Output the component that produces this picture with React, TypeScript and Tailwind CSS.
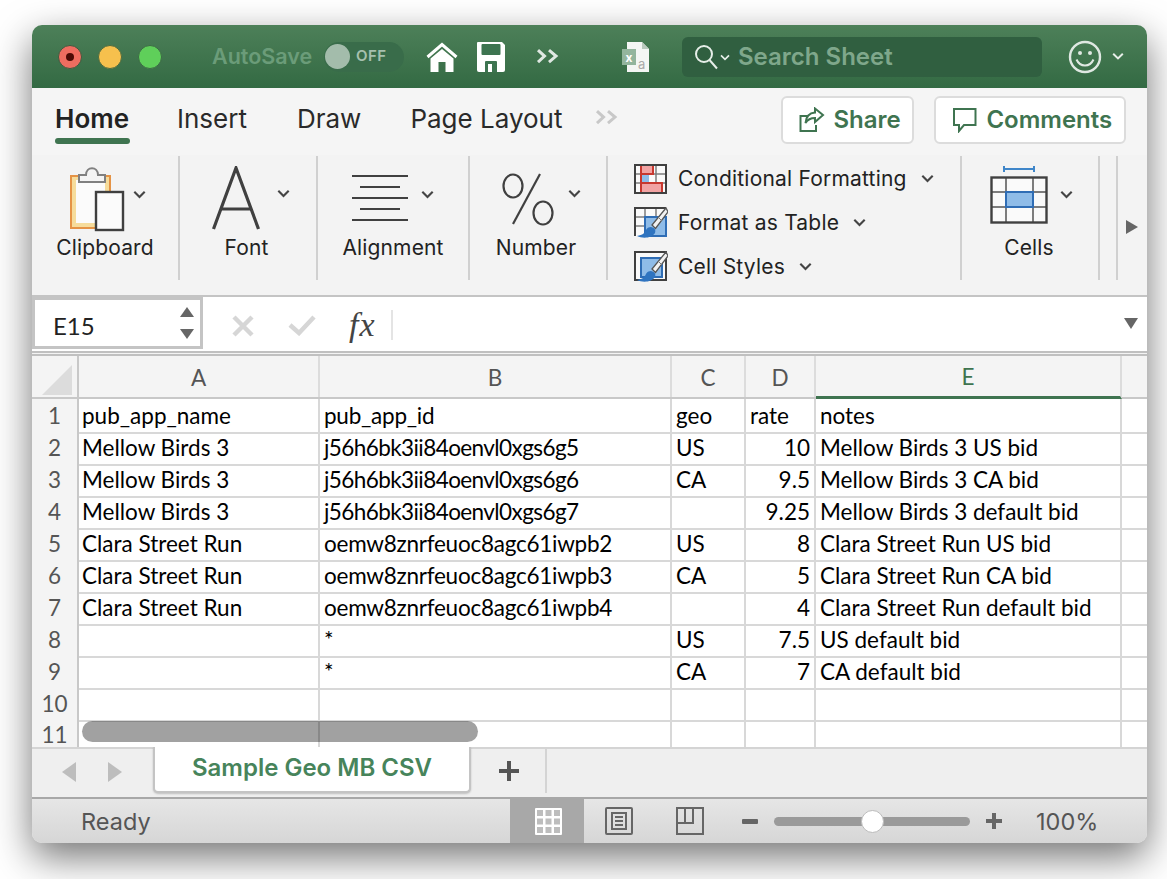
import React from "react";

const UI = "font-['Inter','Liberation_Sans',sans-serif]";
const CELL = "font-['Lato','Open_Sans',sans-serif]";

const Chevron = ({ color = "#444", w = 12, cls = "" }: { color?: string; w?: number; cls?: string }) => (
  <svg width={w} height={w * 0.7} viewBox="0 0 12 8" className={cls} fill="none">
    <path d="M1.2 1.5 6 6.2l4.8-4.700" stroke={color} strokeWidth="2" />
  </svg>
);

const Home = () => (
  <svg width="32" height="30" viewBox="0 0 32 30">
    <path d="M1.500 15 16 2.500 30.500 15" fill="none" stroke="#fff" strokeWidth="3" />
    <path d="M4.500 16.500 16 7l11.500 9.500V30h-8V20h-7v10h-8z" fill="#fff" />
  </svg>
);

const Save = () => (
  <svg width="28" height="30" viewBox="0 0 28 30">
    <path d="M1 0h24l3 3v25a2 2 0 0 1-2 2H2a2 2 0 0 1-2-2V1a1 1 0 0 1 1-1z" fill="#fff" />
    <rect x="4.500" y="2" width="19" height="11" rx="1" fill="#3d7450" />
    <path d="M8 30V20a1 1 0 0 1 1-1h10a1 1 0 0 1 1 1v10z" fill="#3d7450" />
    <rect x="11" y="22" width="4" height="8" fill="#fff" />
  </svg>
);

const DoubleChevron = ({ color, w = 24 }: { color: string; w?: number }) => (
  <svg width={w} height={w * 0.67} viewBox="0 0 24 16" fill="none">
    <path d="M2 2l6.500 6L2 14M13 2l7 6-7 6" stroke={color} strokeWidth="3" />
  </svg>
);

const FileIcon = () => (
  <svg width="28" height="32" viewBox="0 0 28 32">
    <path d="M5 1h15l7 7v23H5z" fill="#f4f6f4" />
    <path d="M20 1v7h7z" fill="#b9c9bd" />
    <rect x="0" y="8" width="14" height="16" fill="#93b59d" />
    <text x="3.500" y="21" fontSize="12" fontWeight="700" fill="#fff" fontFamily="Inter">x</text>
    <text x="16" y="28" fontSize="13" fill="#a9a9a9" fontFamily="Inter">a</text>
  </svg>
);

const Search = () => (
  <svg width="24" height="26" viewBox="0 0 24 26" fill="none">
    <circle cx="10" cy="10" r="8" stroke="#e6eee8" strokeWidth="2" />
    <path d="M15.500 16 23 24.500" stroke="#e6eee8" strokeWidth="2" />
  </svg>
);

const Smile = () => (
  <svg width="34" height="34" viewBox="0 0 34 34" fill="none">
    <circle cx="17" cy="17" r="15" stroke="#dfe8e2" strokeWidth="2.400" />
    <circle cx="12" cy="13" r="2" fill="#dfe8e2" />
    <circle cx="22" cy="13" r="2" fill="#dfe8e2" />
    <path d="M8.500 19.500c2 4.500 5 6 8.500 6s6.500-1.500 8.500-6" stroke="#dfe8e2" strokeWidth="2" />
  </svg>
);

const ShareIcon = () => (
  <svg width="26" height="26" viewBox="0 0 26 26" fill="none" stroke="#3f7450" strokeWidth="2">
    <path d="M9 9H1.500v15h15.500v-6" />
    <path d="M16 1.500 24 8l-8 7v-4c-4 0-7 1-9.500 5 .5-6 4-10 9.500-10.500z" />
  </svg>
);

const CommentIcon = () => (
  <svg width="26" height="26" viewBox="0 0 26 26" fill="none" stroke="#3f7450" strokeWidth="2">
    <path d="M2 2h21.500v16H12l-5 6v-6H2z" />
  </svg>
);

const Clipboard = () => (
  <svg width="56" height="68" viewBox="0 0 56 68">
    <rect x="1" y="10" width="39" height="52" fill="#f6dc9b" stroke="#e59345" strokeWidth="2" />
    <rect x="6" y="14" width="29" height="43" fill="#fbfbfb" />
    <path d="M9 16v-7h7c0-9 12-9 12 0h7v7z" fill="#f4f4f4" stroke="#808080" strokeWidth="2" />
    <rect x="26" y="26" width="27" height="38" fill="#fbfbfb" stroke="#3f3f3f" strokeWidth="2.400" />
  </svg>
);

const BigA = () => (
  <svg width="48" height="64" viewBox="0 0 48 64" fill="none" stroke="#404040" strokeWidth="3.200">
    <path d="M1.500 63 24 2l22.500 61M8 43h32" />
  </svg>
);

const AlignIcon = () => (
  <svg width="56" height="48" viewBox="0 0 56 48" stroke="#404040" strokeWidth="2">
    <path d="M0 2h56M8 13h40M0 24h56M8 35h40M0 46h56" />
  </svg>
);

const Percent = () => (
  <svg width="52" height="54" viewBox="0 0 52 54" fill="none" stroke="#404040" strokeWidth="2.200">
    <ellipse cx="11" cy="14" rx="9.500" ry="11.500" />
    <ellipse cx="41" cy="41" rx="9.500" ry="11.500" />
    <path d="M38 2 11 52" />
  </svg>
);

const CondFmt = () => (
  <svg width="33" height="30" viewBox="0 0 33 30">
    <rect x="1" y="1" width="31" height="28" fill="#fafafa" />
    <path d="M11 1v28M22 1v28M1 10h31M1 19h31" stroke="#7d7d7d" strokeWidth="1.500" />
    <path d="M7 1h12v9H7z" fill="#f2a3a3" stroke="#c8382f" strokeWidth="2" />
    <path d="M7 19h21v10H7z" fill="#f2a3a3" stroke="#c8382f" strokeWidth="2" />
    <path d="M7 1v28" stroke="#c8382f" strokeWidth="2" />
    <rect x="8" y="11" width="7" height="7" fill="#8fbce8" />
    <rect x="1" y="1" width="31" height="28" fill="none" stroke="#404040" strokeWidth="2" />
  </svg>
);

const Brush = () => (
  <g>
    <path d="M32 1 18 18l3.500 3.500L34 5z" fill="#f2f2f2" stroke="#555" strokeWidth="1.300" />
    <path d="M24 10l4 4" stroke="#777" strokeWidth="1" />
    <path d="M17 20c-4 0-5 3-6 5-1 2-4 3-8 4 6 3 15 2 18-3 1-3 0-5-4-6z" fill="#2f74c0" />
  </g>
);

const TableFmt = () => (
  <svg width="34" height="32" viewBox="0 0 34 32">
    <rect x="1" y="1" width="31" height="28" fill="#fafafa" />
    <path d="M11 1v28M22 1v28M1 10h31M1 19h31" stroke="#7d7d7d" strokeWidth="1.500" />
    <path d="M1 29V1h31" fill="none" stroke="#404040" strokeWidth="2" />
    <rect x="11" y="10" width="21" height="19" fill="#8fbce8" stroke="#2f6db5" strokeWidth="2" />
    <Brush />
  </svg>
);

const StyleFmt = () => (
  <svg width="34" height="32" viewBox="0 0 34 32">
    <rect x="1" y="1" width="31" height="28" fill="#fafafa" stroke="#404040" strokeWidth="2" />
    <rect x="7" y="7" width="21" height="19" fill="#8fbce8" stroke="#2f6db5" strokeWidth="2" />
    <Brush />
  </svg>
);

const CellsIcon = () => (
  <svg width="58" height="58" viewBox="0 0 58 58">
    <path d="M14 3h30" stroke="#3f86c9" strokeWidth="2" />
    <path d="M14 0v6M44 0v6" stroke="#3f86c9" strokeWidth="2" />
    <rect x="1.500" y="11" width="55" height="45" fill="#fafafa" />
    <path d="M16 11v45M43 11v45M1 26h56M1 41h56" stroke="#7d7d7d" strokeWidth="2" />
    <rect x="16" y="26" width="27" height="15" fill="#8fbce8" stroke="#2f6db5" strokeWidth="2" />
    <rect x="1.500" y="11.500" width="55" height="45" fill="none" stroke="#404040" strokeWidth="2.400" />
  </svg>
);

function Group({ w, pl, label, labelCls = "", children }: { w: string; pl: string; label: string; labelCls?: string; children: React.ReactNode }) {
  return (
    <div className={`${w} h-[124px] shrink-0 flex flex-col border-r-2 border-[#d0d0d0]`}>
      <div className={`h-[80px] flex pt-[10px] ${pl}`}>{children}</div>
      <div className={`h-[24px] leading-[24px] text-center text-[21px] tracking-[0.15px] text-[#222] ${labelCls}`}>{label}</div>
    </div>
  );
}

const rows: [string, string, string, string, string][] = [
  ["pub_app_name", "pub_app_id", "geo", "rate", "notes"],
  ["Mellow Birds 3", "j56h6bk3ii84oenvl0xgs6g5", "US", "10", "Mellow Birds 3 US bid"],
  ["Mellow Birds 3", "j56h6bk3ii84oenvl0xgs6g6", "CA", "9.5", "Mellow Birds 3 CA bid"],
  ["Mellow Birds 3", "j56h6bk3ii84oenvl0xgs6g7", "", "9.25", "Mellow Birds 3 default bid"],
  ["Clara Street Run", "oemw8znrfeuoc8agc61iwpb2", "US", "8", "Clara Street Run US bid"],
  ["Clara Street Run", "oemw8znrfeuoc8agc61iwpb3", "CA", "5", "Clara Street Run CA bid"],
  ["Clara Street Run", "oemw8znrfeuoc8agc61iwpb4", "", "4", "Clara Street Run default bid"],
  ["", "*", "US", "7.5", "US default bid"],
  ["", "*", "CA", "7", "CA default bid"],
  ["", "", "", "", ""],
  ["", "", "", "", ""],
];

const gridCols = "grid grid-cols-[47px_241px_352px_74px_70px_306px_25px]";

export default function App() {
  return (
    <div className="w-[1167px] h-[879px] bg-white pt-[25px] pl-[32px] overflow-hidden">
      <div className={`${UI} w-[1115px] h-[818px] rounded-[10px] overflow-hidden flex flex-col shadow-[0_14px_38px_rgba(0,0,0,0.55)] bg-[#f3f3f3]`}>
        {/* Title bar */}
        <div className="h-[63px] shrink-0 flex items-center bg-gradient-to-b from-[#4d8059] to-[#336a43] pl-[26px]">
          <div className="w-[24px] h-[24px] rounded-full bg-[#ef6d60] border border-[#3d5a3f] flex items-center justify-center">
            <div className="w-[8px] h-[8px] rounded-full bg-[#4c0b06]" />
          </div>
          <div className="w-[24px] h-[24px] rounded-full bg-[#f6c04d] border border-[#4d6a3f] ml-[16px]" />
          <div className="w-[24px] h-[24px] rounded-full bg-[#5fcf5a] border border-[#3d6a45] ml-[16px]" />
          <div className="ml-[50px] w-[100px] whitespace-nowrap text-[21.5px] font-semibold text-[#6b9c79]">AutoSave</div>
          <div className="ml-[12px] w-[80px] h-[30px] rounded-full bg-[#396c4a] flex items-center pl-[1px]">
            <div className="w-[25px] h-[25px] rounded-full bg-[#a3bcab]" />
            <div className="ml-[6px] text-[15px] font-semibold text-[#a6c0ae] tracking-[0.5px]">OFF</div>
          </div>
          <div className="ml-[22px] flex"><Home /></div>
          <div className="ml-[19px] flex"><Save /></div>
          <div className="ml-[31px] flex"><DoubleChevron color="#dfe8e2" /></div>
          <div className="ml-[62px] flex"><FileIcon /></div>
          <div className="ml-[32px] w-[360px] h-[40px] rounded-[6px] bg-[#305f40] flex items-center pl-[12px]">
            <Search />
            <Chevron color="#e6eee8" w={10} cls="ml-[2px] mt-[2px]" />
            <div className="ml-[8px] text-[24px] font-semibold text-[#7fa78b]">Search Sheet</div>
          </div>
          <div className="ml-[26px] flex"><Smile /></div>
          <Chevron color="#e6eee8" w={12} cls="ml-[10px]" />
        </div>

        {/* Tabs */}
        <div className="h-[67px] shrink-0 flex bg-[#f5f5f5] pl-[23px]">
          <div className="w-[75px] flex flex-col pt-[15px]">
            <div className="h-[32px] leading-[32px] text-[26px] font-semibold text-[#222]">Home</div>
            <div className="mt-[3px] h-[6px] rounded-full bg-[#3f7450]" />
          </div>
          <div className="ml-[47px] pt-[15px] h-[47px] leading-[32px] text-[26px] text-[#2a2a2a]">Insert</div>
          <div className="ml-[50px] pt-[15px] h-[47px] leading-[32px] text-[26px] text-[#2a2a2a]">Draw</div>
          <div className="ml-[49px] w-[153px] pt-[15px] h-[47px] leading-[32px] text-[26px] text-[#2a2a2a] whitespace-nowrap">Page Layout</div>
          <div className="ml-[32px] pt-[21px]"><DoubleChevron color="#c8c8c8" /></div>
          <div className="ml-[162px] mt-[8px] w-[133px] h-[48px] rounded-[6px] border-2 border-[#dcdcdc] bg-white flex items-center pl-[16px]">
            <ShareIcon />
            <span className="ml-[8px] text-[24px] font-semibold text-[#3f7450]">Share</span>
          </div>
          <div className="ml-[20px] mt-[8px] w-[192px] h-[48px] rounded-[6px] border-2 border-[#dcdcdc] bg-white flex items-center pl-[16px]">
            <CommentIcon />
            <span className="ml-[8px] text-[24px] font-semibold text-[#3f7450]">Comments</span>
          </div>
        </div>

        {/* Ribbon */}
        <div className="h-[142px] shrink-0 flex bg-[#f3f3f3] border-b-2 border-[#c4c4c4] pt-[1px]">
          <Group w="w-[148px]" pl="pl-[38px]" label="Clipboard">
            <Clipboard />
            <Chevron w={13} cls="ml-[7px] mt-[24px]" />
          </Group>
          <Group w="w-[138px]" pl="pl-[32px]" label="Font" labelCls="pr-[3px]">
            <BigA />
            <Chevron w={13} cls="ml-[17px] mt-[23px]" />
          </Group>
          <Group w="w-[152px]" pl="pl-[34px] pt-[18px]" label="Alignment">
            <AlignIcon />
            <Chevron w={13} cls="ml-[13px] mt-[16px]" />
          </Group>
          <Group w="w-[138px]" pl="pl-[32px]" label="Number" labelCls="pr-[4px]">
            <div className="mt-[6px] flex"><Percent /></div>
            <Chevron w={13} cls="ml-[14px] mt-[23px]" />
          </Group>
          <div className="w-[354px] h-[124px] shrink-0 flex flex-col border-r-2 border-[#d0d0d0] pt-[1px] pl-[26px] text-[21px] text-[#222] tracking-[0.2px]">
            <div className="h-[44px] shrink-0 flex items-center"><CondFmt /><span className="ml-[11px]">Conditional Formatting</span><Chevron w={13} cls="ml-[14px]" /></div>
            <div className="h-[44px] shrink-0 flex items-center"><TableFmt /><span className="ml-[10px]">Format as Table</span><Chevron w={13} cls="ml-[14px]" /></div>
            <div className="h-[44px] shrink-0 flex items-center"><StyleFmt /><span className="ml-[10px]">Cell Styles</span><Chevron w={13} cls="ml-[14px]" /></div>
          </div>
          <Group w="w-[138px]" pl="pl-[28px] pt-[8px]" label="Cells" labelCls="pr-[2px]">
            <CellsIcon />
            <Chevron w={13} cls="ml-[12px] mt-[24px]" />
          </Group>
          <div className="w-[18px] h-[124px] shrink-0 border-r-2 border-[#d0d0d0]" />
          <div className="flex-1 flex pl-[8px] pt-[64px]">
            <div className="w-0 h-0 border-y-[7px] border-y-transparent border-l-[12px] border-l-[#666]" />
          </div>
        </div>

        {/* Formula bar */}
        <div className="h-[56px] shrink-0 flex bg-white border-b-2 border-[#c0c0c0]">
          <div className={`${CELL} w-[171px] h-[52px] flex items-center border-t-[3px] border-x-[3px] border-b-[3px] border-[#c4c4c4] pl-[18px] text-[24px] text-[#222]`}>
            <span className="w-[127px] pt-[6px]">E15</span>
            <div className="flex flex-col gap-[12px]">
              <div className="w-0 h-0 border-x-[7px] border-x-transparent border-b-[10px] border-b-[#666]" />
              <div className="w-0 h-0 border-x-[7px] border-x-transparent border-t-[10px] border-t-[#666]" />
            </div>
          </div>
          <svg width="22" height="22" viewBox="0 0 22 22" className="ml-[29px] mt-[18px]" stroke="#d6d6d6" strokeWidth="4.500"><path d="M2 2l18 18M20 2 2 20" /></svg>
          <svg width="28" height="22" viewBox="0 0 28 22" className="ml-[34px] mt-[17px]" fill="none" stroke="#d6d6d6" strokeWidth="4.500"><path d="M2 11l9 8L26 3" /></svg>
          <div className="ml-[33px] mt-[11px] h-[34px] text-[34px] leading-[34px] italic tracking-[1px] text-[#444] font-['Liberation_Serif',serif]">fx</div>
          <div className="ml-[15px] mt-[13px] w-[2px] h-[30px] bg-[#e4e4e4]" />
          <div className="ml-auto mr-[9px] mt-[21px] w-0 h-0 border-x-[7px] border-x-transparent border-t-[11px] border-t-[#666]" />
        </div>

        {/* Sheet */}
        <div className={`${CELL} relative h-[393px] shrink-0 overflow-hidden bg-white border-t-2 border-[#c0c0c0] mt-[1px] text-[22.5px] text-black`}>
          <div className={`${gridCols} h-[43px] bg-[#f4f4f4] text-[#555] border-b-2 border-[#c8c8c8]`}>
            <div className="flex items-end justify-end border-r-2 border-[#c8c8c8] pr-[5px] pb-[2px]">
              <div className="w-0 h-0 border-l-[30px] border-l-transparent border-b-[30px] border-b-[#dcdcdc]" />
            </div>
            {["A", "B", "C", "D"].map((c) => (
              <div key={c} className="flex items-center justify-center border-r-2 border-[#dcdcdc] pt-[2px]">{c}</div>
            ))}
            <div className="flex items-center justify-center text-[#3f7450] border-b-[3px] border-[#3f7450] -mb-[2px] border-r-2 border-r-[#dcdcdc] pt-[2px]">E</div>
            <div />
          </div>
          {rows.map((r, i) => (
            <div key={i} className={`${gridCols} ${i === 10 ? "h-[28px]" : "h-[32px]"} leading-[32px] whitespace-nowrap`}>
              <div className={`text-center bg-[#f4f4f4] text-[#555] border-r-2 border-r-[#c8c8c8] border-b-2 border-b-[#d8d8d8] ${i === 10 ? "pt-[4px] leading-[24px]" : "pt-[1px]"}`}>{i + 1}</div>
              <div className="pl-[3px] pt-[1px] border-r-2 border-b-2 border-[#d8d8d8]">{r[0]}</div>
              <div className={`pl-[4px] pt-[1px] border-r-2 border-b-2 border-[#d8d8d8] ${r[1].startsWith("j") ? "tracking-[-0.58px]" : "tracking-[-0.25px]"}`}>{r[1]}</div>
              <div className="pl-[4px] pt-[1px] border-r-2 border-b-2 border-[#d8d8d8]">{r[2]}</div>
              <div className={`${i === 0 ? "pl-[4px]" : "text-right pr-[4px]"} pt-[1px] border-r-2 border-b-2 border-[#d8d8d8]`}>{r[3]}</div>
              <div className="pl-[4px] pt-[1px] border-r-2 border-b-2 border-[#d8d8d8]">{r[4]}</div>
              <div className="border-b-2 border-[#d8d8d8]" />
            </div>
          ))}
          <div className="absolute left-[50px] bottom-[5px] w-[396px] h-[21px] rounded-full bg-black/[0.37]" />
        </div>

        {/* Sheet tabs */}
        <div className="h-[52px] shrink-0 flex bg-[#efefef] border-t-2 border-[#d4d4d4] border-b-[2px] border-b-[#a8a8a8]">
          <div className="w-[121px] flex items-center pl-[30px] pb-[2px]">
            <div className="w-0 h-0 border-y-[10px] border-y-transparent border-r-[14px] border-r-[#bdbdbd]" />
            <div className="ml-[32px] w-0 h-0 border-y-[10px] border-y-transparent border-l-[14px] border-l-[#bdbdbd]" />
          </div>
          <div className="w-[318px] h-[46px] -mt-[2px] bg-white border-x-2 border-b-2 border-[#c4c4c4] rounded-b-[5px] shadow-[0_1px_2px_rgba(0,0,0,0.2)] flex items-center justify-center text-[24px] font-semibold text-[#47845b] pb-[3px]">
            Sample Geo MB CSV
          </div>
          <div className="w-[76px] flex items-center justify-center border-r-2 border-[#d4d4d4] h-[44px] pl-[2px]">
            <svg width="22" height="22" viewBox="0 0 22 22" fill="#555"><path d="M9 1h4v8h8v4h-8v8H9v-8H1V9h8z" /></svg>
          </div>
        </div>

        {/* Status bar */}
        <div className="flex-1 flex items-center bg-gradient-to-b from-[#e6e6e6] to-[#d6d6d6] pl-[49px] text-[#555]">
          <div className="w-[429px] text-[23.5px] pt-[2px]">Ready</div>
          <div className="w-[74px] h-full bg-[#a8a8a8] flex items-center justify-center pl-[2px]">
            <svg width="27" height="27" viewBox="0 0 27 27">
              <rect x="0" y="0" width="27" height="27" rx="1" fill="#fff" />
              <path d="M2 2h6v6H2zM10.500 2h6v6h-6zM19 2h6v6h-6zM2 10.500h6v6H2zM10.500 10.500h6v6h-6zM19 10.500h6v6h-6zM2 19h6v6H2zM10.500 19h6v6h-6zM19 19h6v6h-6z" fill="#bdbdbd" />
            </svg>
          </div>
          <svg width="28" height="28" viewBox="0 0 28 28" className="ml-[21px]" fill="none" stroke="#666" strokeWidth="2">
            <rect x="1" y="1" width="26" height="26" rx="1" />
            <path d="M7 6h14v16H7z" />
            <path d="M10 10h8M10 14h8M10 18h8" />
          </svg>
          <svg width="28" height="28" viewBox="0 0 28 28" className="ml-[43px]" fill="none" stroke="#666" strokeWidth="2">
            <path d="M1 1h26v26H1zM1 16h16V1M9 1v15" />
          </svg>
          <div className="ml-[38px] w-[16px] h-[5px] bg-[#666] rounded-[1px]" />
          <div className="ml-[16px] relative w-[196px] h-[9px] rounded-full bg-[#9a9a9a]">
            <div className="absolute left-[87px] -top-[7px] w-[23px] h-[23px] rounded-full bg-white border border-[#bbb]" />
          </div>
          <svg width="16" height="16" viewBox="0 0 16 16" className="ml-[16px]" fill="#666"><path d="M6 0h4v6h6v4h-6v6H6v-6H0V6h6z" /></svg>
          <div className="ml-[34px] text-[23.5px] whitespace-nowrap pt-[2px]">100%</div>
        </div>
      </div>
    </div>
  );
}
